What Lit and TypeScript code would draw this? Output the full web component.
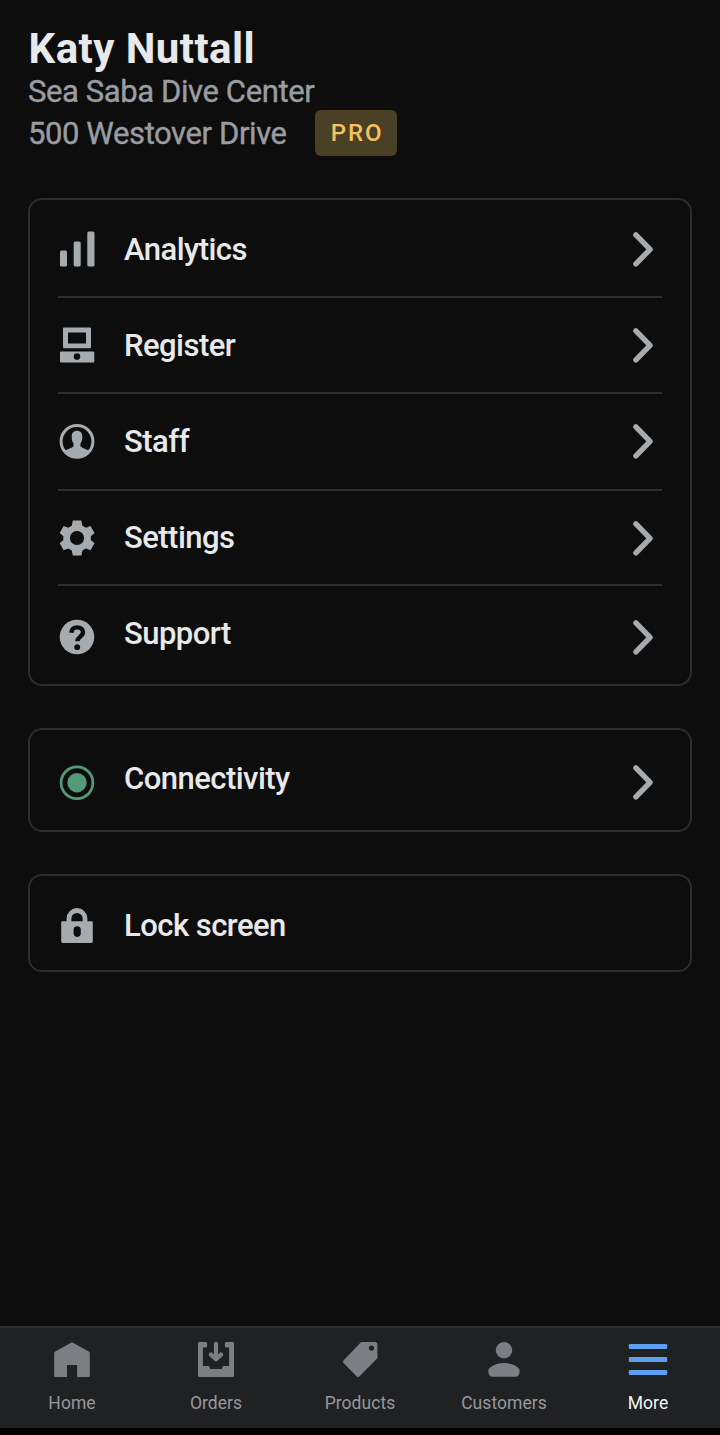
import { LitElement, html, svg, css } from "lit";
import { customElement, property } from "lit/decorators.js";

const icons: Record<string, unknown> = {
  analytics: svg`<rect x="3" y="21.5" width="7" height="16" rx="1.5"/><rect x="16.7" y="12.5" width="7" height="25" rx="1.5"/><rect x="30.3" y="2.5" width="7.2" height="35" rx="1.5"/>`,
  register: svg`<path fill-rule="evenodd" d="M7 2.5h26a1 1 0 0 1 1 1v18.700a1 1 0 0 1-1 1H7a1 1 0 0 1-1-1V3.500a1 1 0 0 1 1-1ZM11 7.500v11h18v-11Z"/><path fill-rule="evenodd" d="M4 26.500h32.300a1 1 0 0 1 1 1v9a1 1 0 0 1-1 1H4a1 1 0 0 1-1-1v-9a1 1 0 0 1 1-1ZM20 28.300a3.300 3.300 0 1 0 0 6.600a3.300 3.300 0 0 0 0-6.600Z"/>`,
  staff: svg`<circle cx="20" cy="20.400" r="15.900" fill="none" stroke="currentColor" stroke-width="3"/><path d="M20 9.800c3.300 0 5.300 2.200 5.300 5.600 0 3.200-.5 5.200-1.900 7.200v2.600c1.600 2 5.500 2.600 8.700 4.300C29.500 34 24.600 36.800 20 36.800S10.500 34 7.900 29.500c3.200-1.700 7.100-2.300 8.700-4.300v-2.600c-1.400-2-1.900-4-1.900-7.200 0-3.400 2-5.600 5.300-5.600Z"/>`,
  settings: svg`<path fill-rule="evenodd" d="M15.800 2.500h8.600l1 5.200c1.300.5 2.500 1.200 3.600 2l4.500-1.700 4 7-3.700 3.200c.2 1.300.2 2.500 0 3.800l3.700 3.200-4 7-4.700-1.600a14 14 0 0 1-3.400 2l-1 4.900h-8.600l-1-4.900a14 14 0 0 1-3.400-2l-4.700 1.600-4-7 3.700-3.200a13 13 0 0 1 0-3.800L2.700 15l4-7 4.500 1.700c1.100-.8 2.300-1.500 3.600-2ZM20 12.900a7.100 7.100 0 1 0 0 14.200a7.100 7.100 0 0 0 0-14.200Z"/>`,
  support: svg`<circle cx="20" cy="20" r="17.300"/><path d="M14.300 15.800c.3-3.500 2.700-5.400 6-5.400 3.400 0 5.700 2 5.700 4.900 0 4.500-5.700 4.600-5.700 8.900" fill="none" stroke="#0d0d0d" stroke-width="4.400"/><circle cx="20.200" cy="30.200" r="2.900" fill="#0d0d0d"/>`,
  connectivity: svg`<circle cx="20" cy="20.700" r="15.900" fill="none" stroke="currentColor" stroke-width="2.800"/><circle cx="20" cy="20.700" r="9.700"/>`,
  lock: svg`<path d="M12 18v-4.500a8 8 0 0 1 16 0V18" fill="none" stroke="currentColor" stroke-width="4.800"/><path fill-rule="evenodd" d="M5.500 16.300h29a1.300 1.300 0 0 1 1.300 1.300v19a1.300 1.300 0 0 1-1.300 1.300h-29a1.300 1.300 0 0 1-1.300-1.300v-19a1.300 1.300 0 0 1 1.300-1.300ZM20.200 21.300a3.600 3.600 0 0 0-3.600 3.600v3.400a3.600 3.600 0 0 0 7.200 0v-3.400a3.600 3.600 0 0 0-3.600-3.600Z"/>`,
  chevron: svg`<path d="M13.900 5.900 28.100 20.400 13.900 34.900" fill="none" stroke="currentColor" stroke-width="5.400" stroke-linecap="round" stroke-linejoin="round"/>`,
  home: svg`<path d="M20 2.300 36.700 11.400Q37.800 12 37.800 13.200V35.700a1.200 1.200 0 0 1-1.200 1.200H25.100V25.100H15V36.900H3.400a1.200 1.200 0 0 1-1.200-1.200V13.200Q2.200 12 3.300 11.400Z"/>`,
  orders: svg`<path d="M3.300 2h6.300a1.500 1.500 0 0 1 1.500 1.500V6a1.500 1.500 0 0 1-1.500 1.500H6.900V26h5.200q1 0 1.300 1l.7 2h11.800l.7-2q.3-1 1.300-1h5.200V7.500h-2.700A1.500 1.500 0 0 1 28.900 6V3.500A1.500 1.500 0 0 1 30.400 2h6.300A1.300 1.300 0 0 1 38 3.300v32.300a1.300 1.300 0 0 1-1.300 1.300H3.300A1.300 1.300 0 0 1 2 35.600V3.300A1.300 1.300 0 0 1 3.300 2Z"/><path d="M20 3.800v14M14.900 14.600 20 19.300l5.100-4.700" fill="none" stroke="currentColor" stroke-width="4.200" stroke-linecap="round" stroke-linejoin="round"/>`,
  products: svg`<path fill-rule="evenodd" d="M22 2h12.800q2.600 0 2.600 2.600v12.900q0 .9-.7 1.600L19.300 36.400q-1.300 1.100-2.600 0L3.500 23q-1.100-1.300 0-2.600L20.400 2.700Q21.100 2 22 2ZM31.500 5.500a2.600 2.600 0 1 0 0 5.200a2.600 2.600 0 0 0 0-5.200Z"/>`,
  customers: svg`<circle cx="20" cy="10.300" r="8.200"/><path d="M20 23c7 0 12.700 2.900 15 5.800 1.300 1.700.7 8-3.200 8H8.200c-3.900 0-4.500-6.300-3.200-8 2.300-2.900 8-5.800 15-5.800Z"/>`,
  more: svg`<rect x=".8" y="4" width="38.400" height="5" rx="1"/><rect x=".8" y="17" width="38.400" height="5" rx="1"/><rect x=".8" y="30" width="38.400" height="5" rx="1"/>`,
};

@customElement("ui-icon")
class UiIcon extends LitElement {
  @property() name = "";
  static styles = css`
    :host { display: block; width: 40px; height: 40px; flex: none; }
    svg { display: block; }
  `;
  render() {
    return html`<svg width="40" height="40" viewBox="0 0 40 40" fill="currentColor">${icons[this.name]}</svg>`;
  }
}

const menu = [
  { icon: "analytics", label: "Analytics" },
  { icon: "register", label: "Register" },
  { icon: "staff", label: "Staff" },
  { icon: "settings", label: "Settings" },
  { icon: "support", label: "Support" },
];
const tabs = ["Home", "Orders", "Products", "Customers", "More"];

@customElement("app-root")
class AppRoot extends LitElement {
  static styles = css`
    :host {
      display: flex; flex-direction: column; box-sizing: border-box;
      width: 720px; height: 1435px; overflow: hidden;
      background: #0d0d0d; color: #e8e9eb;
      font-family: Roboto, "Liberation Sans", sans-serif;
    }
    * { box-sizing: border-box; }
    header { height: 198px; padding: 25px 28px 0; white-space: nowrap; }
    h1 { margin: 0; padding-left: 0.5px; font-size: 42px; line-height: 48px; font-weight: 700; letter-spacing: 0.45px; }
    .sub { font-size: 31px; line-height: 38px; color: #999da1; -webkit-text-stroke: 0.4px #999da1; letter-spacing: -0.4px; }
    .place { display: flex; align-items: flex-start; height: 46px; gap: 28.5px; margin-top: -1px; }
    .place .sub { line-height: 48px; }
    .pro {
      display: flex; align-items: center; justify-content: center;
      width: 82px; height: 46px; border-radius: 6px; padding-left: 2px;
      background: #4a4026; color: #f7c25e;
      font-size: 24px; font-weight: 500; letter-spacing: 2px;
    }
    main { flex: 1; display: flex; flex-direction: column; gap: 42px; padding: 0 28px; }
    .card { border: 2px solid #2b2c2d; border-radius: 14px; padding: 0 28px; }
    .menu { display: grid; height: 488px; grid-template-rows: 98px 96px 97px 95px 98px; }
    .connect { height: 104px; }
    .lock { height: 98px; }
    .row {
      display: flex; align-items: flex-start; height: 100%; padding-top: 27px;
      border-bottom: 2px solid #2e2f30;
    }
    .row:last-child { border-bottom: 0; }
    .row ui-icon { color: #a5abaf; margin-left: -1px; }
    .row .label {
      flex: 1; margin-left: 27px; font-size: 31px; line-height: 42px; font-weight: 500;
      letter-spacing: -0.53px; white-space: nowrap;
    }
    .row.analytics { padding-top: 29px; }
    .row.settings .label { line-height: 40px; }
    .row.support ui-icon { margin-top: 4px; }
    .row.connectivity { padding-top: 28px; }
    .row.connectivity ui-icon { margin-top: 4px; }
    .row.connectivity .mark { color: #549a79; }
    .row.lock-row { padding-top: 29px; }
    .row.lock-row .label { line-height: 41px; }
    nav {
      display: grid; grid-template-columns: repeat(5, 1fr); height: 109px;
      background: #202123; border-top: 2px solid #303132; border-bottom: 7px solid #000;
    }
    .tab {
      display: flex; flex-direction: column; align-items: center; padding-top: 12px;
      color: #7c7e84; font-size: 17.5px;
    }
    .tab span { margin-top: 11px; line-height: 25px; color: #96989c; letter-spacing: 0.05px; }
    .tab.active { color: #5f9ff2; }
    .tab.active span { color: #f2f3f4; }
  `;

  row(icon: string, label: string, cls: string, chevron = true) {
    return html`<div class="row ${cls}">
      <ui-icon class="mark" name=${icon}></ui-icon>
      <span class="label">${label}</span>
      ${chevron ? html`<ui-icon class="go" name="chevron"></ui-icon>` : ""}
    </div>`;
  }

  render() {
    return html`
      <header>
        <h1>Katy Nuttall</h1>
        <div class="sub">Sea Saba Dive Center</div>
        <div class="place"><span class="sub">500 Westover Drive</span><span class="pro">PRO</span></div>
      </header>
      <main>
        <section class="card menu">${menu.map((m) => this.row(m.icon, m.label, m.icon))}</section>
        <section class="card connect">${this.row("connectivity", "Connectivity", "connectivity")}</section>
        <section class="card lock">${this.row("lock", "Lock screen", "lock-row", false)}</section>
      </main>
      <nav>
        ${tabs.map((t) => html`<div class="tab ${t === "More" ? "active" : ""}">
          <ui-icon name=${t.toLowerCase()}></ui-icon><span>${t}</span>
        </div>`)}
      </nav>
    `;
  }
}
